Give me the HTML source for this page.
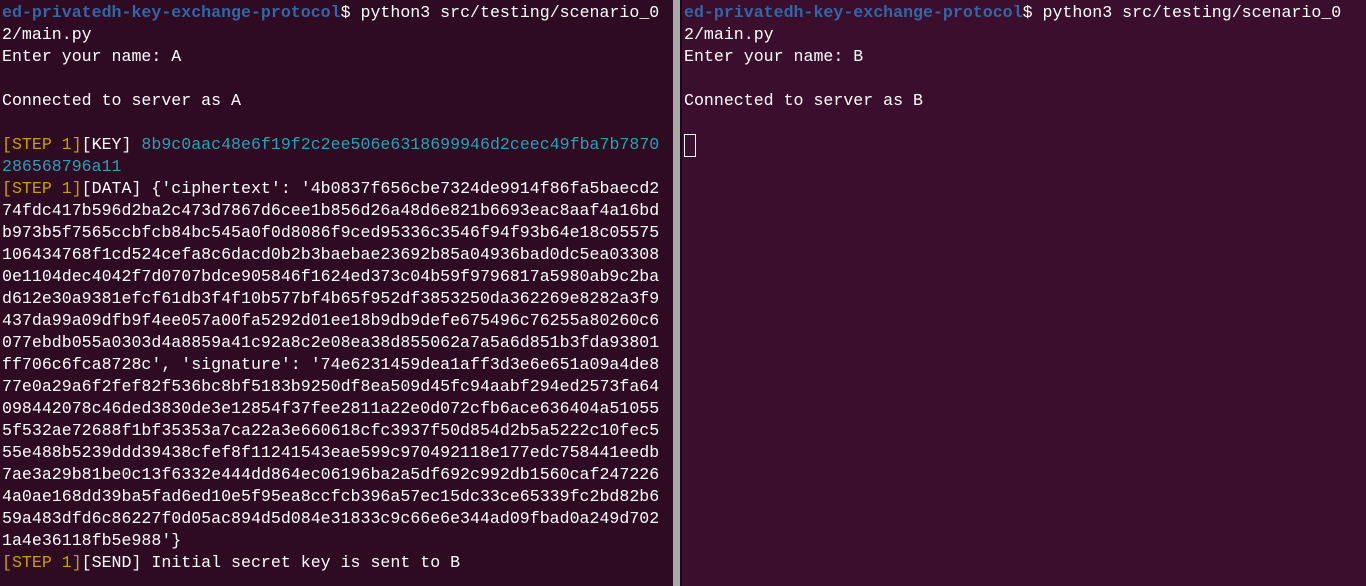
<!DOCTYPE html>
<html><head><meta charset="utf-8"><style>
html,body{margin:0;padding:0;width:1366px;height:586px;overflow:hidden;background:#300a24}
.pane{position:absolute;top:0;height:586px;font-family:"Liberation Mono",monospace;font-size:16.6px;line-height:22px;color:#ffffff;white-space:pre;overflow:hidden}
#l{left:0;width:673px;background:#2e0a23;padding-left:2px;box-sizing:border-box;padding-top:2px}
#div{position:absolute;left:673px;top:0;width:7px;height:586px;background:#a8a8a8}
#div2{position:absolute;left:680px;top:0;width:2px;height:586px;background:#1e0617}
#r{left:682px;width:684px;background:#3a0e2c;padding-left:2px;box-sizing:border-box;padding-top:2px}
.p{color:#3465a4;font-weight:bold}
.y{color:#c4a000}
.c{color:#2aa1b3}
.cur{display:inline-block;width:10px;height:21px;border:1px solid #fff;vertical-align:top;margin-top:0px}
</style></head><body>
<div class="pane" id="l"><span class="p">ed-privatedh-key-exchange-protocol</span>$ python3 src/testing/scenario_0
2/main.py
Enter your name: A

Connected to server as A

<span class="y">[STEP 1]</span>[KEY] <span class="c">8b9c0aac48e6f19f2c2ee506e6318699946d2ceec49fba7b7870
286568796a11</span>
<span class="y">[STEP 1]</span>[DATA] {'ciphertext': '4b0837f656cbe7324de9914f86fa5baecd2
74fdc417b596d2ba2c473d7867d6cee1b856d26a48d6e821b6693eac8aaf4a16bd
b973b5f7565ccbfcb84bc545a0f0d8086f9ced95336c3546f94f93b64e18c05575
106434768f1cd524cefa8c6dacd0b2b3baebae23692b85a04936bad0dc5ea03308
0e1104dec4042f7d0707bdce905846f1624ed373c04b59f9796817a5980ab9c2ba
d612e30a9381efcf61db3f4f10b577bf4b65f952df3853250da362269e8282a3f9
437da99a09dfb9f4ee057a00fa5292d01ee18b9db9defe675496c76255a80260c6
077ebdb055a0303d4a8859a41c92a8c2e08ea38d855062a7a5a6d851b3fda93801
ff706c6fca8728c', 'signature': '74e6231459dea1aff3d3e6e651a09a4de8
77e0a29a6f2fef82f536bc8bf5183b9250df8ea509d45fc94aabf294ed2573fa64
098442078c46ded3830de3e12854f37fee2811a22e0d072cfb6ace636404a51055
5f532ae72688f1bf35353a7ca22a3e660618cfc3937f50d854d2b5a5222c10fec5
55e488b5239ddd39438cfef8f11241543eae599c970492118e177edc758441eedb
7ae3a29b81be0c13f6332e444dd864ec06196ba2a5df692c992db1560caf247226
4a0ae168dd39ba5fad6ed10e5f95ea8ccfcb396a57ec15dc33ce65339fc2bd82b6
59a483dfd6c86227f0d05ac894d5d084e31833c9c66e6e344ad09fbad0a249d702
1a4e36118fb5e988'}
<span class="y">[STEP 1]</span>[SEND] Initial secret key is sent to B</div>
<div id="div"></div><div id="div2"></div>
<div class="pane" id="r"><span class="p">ed-privatedh-key-exchange-protocol</span>$ python3 src/testing/scenario_0
2/main.py
Enter your name: B

Connected to server as B

<span class="cur"></span></div>
</body></html>
